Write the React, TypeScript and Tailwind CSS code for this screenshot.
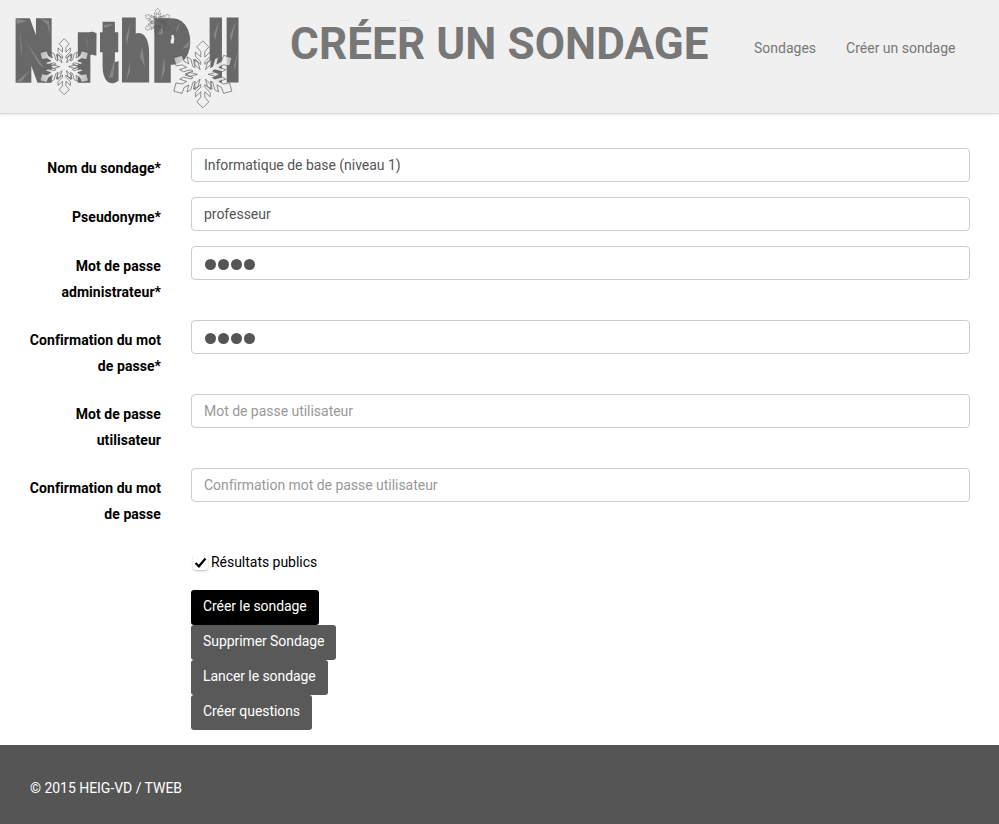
import React from "react";

const ARM: [number, number][] = [
  [-8, -14], [-24, -30], [-24, -46], [-6, -30], [-6, -38], [-22, -54], [-22, -67], [-6, -52], [-6, -68], [-18, -82],
  [0, -100],
  [18, -82], [6, -68], [6, -52], [22, -67], [22, -54], [6, -38], [6, -30], [24, -46], [24, -30],
];

function flakePoints(cx: number, cy: number, r: number) {
  const out: string[] = [];
  for (let i = 0; i < 6; i++) {
    const a = (i * Math.PI) / 3;
    for (const [x, y] of ARM) {
      const px = cx + ((x * Math.cos(a) - y * Math.sin(a)) * r) / 100;
      const py = cy + ((x * Math.sin(a) + y * Math.cos(a)) * r) / 100;
      out.push(`${px.toFixed(1)},${py.toFixed(1)}`);
    }
  }
  return out.join(" ");
}

type LetterProps = { char: string; x: number; sx: number; sy?: number };

function Letter({ char, x, sx, sy = 1 }: LetterProps) {
  return (
    <text
      transform={`translate(${x} 77) scale(${sx} ${sy})`}
      fontSize="74"
      fontWeight="900"
      strokeWidth="11.5"
      strokeLinejoin="miter"
      strokeMiterlimit="2"
    >
      {char}
    </text>
  );
}

function Logo() {
  return (
    <svg className="block h-[113px] w-[250px] font-[Roboto,sans-serif]" viewBox="0 0 250 113" role="img" aria-label="NorthPoll">
      <defs>
        <radialGradient id="ice">
          <stop offset="0" stopColor="#f0f0f0" />
          <stop offset="0.5" stopColor="#f0f0f0" stopOpacity="0.95" />
          <stop offset="1" stopColor="#f0f0f0" stopOpacity="0.65" />
        </radialGradient>
      </defs>
      <g fill="#686868" stroke="#686868">
        <Letter char="N" x={16.8} sx={0.65} />
        <Letter char="r" x={79} sx={0.53} />
        <Letter char="t" x={102.8} sx={0.52} />
        <Letter char="h" x={123.5} sx={0.58} sy={0.97} />
        <Letter char="P" x={155.5} sx={0.68} />
        <Letter char="l" x={210.5} sx={0.52} sy={0.97} />
        <Letter char="l" x={227.5} sx={0.5} sy={0.97} />
      </g>
      <path d="M171.5 35h2q1.5 3.500 0 8h-2z" fill="#f0f0f0" />
      <g fill="#888">
        <path d="M16 19l11 2-10 3zM41 19l8 2 1 14-3-11zM25 40l19 28-5-4zM16 82l13-11-7 10zM20 30l2 18-1 8z" />
        <path d="M86 36l3 15-3-11zM103 25l11-1-9 4zM109 78l6-20-2 19zM131 22l-4 23-1-8zM142 47l3 20-5-10zM126 82l4-21 0 10z" />
        <path d="M158 35l4-12 1 11zM180 23l-4 11 1-7zM190 40l-8 9 6-2zM161 81l3-25 1 14zM219 21l-4 20-1-7zM236 21l-5 21-1-7zM238 50l-3 20-1-4z" />
      </g>
      <g stroke="#555" strokeWidth="0.65" strokeLinejoin="round">
        <polygon points={flakePoints(64.2, 66.7, 28)} fill="url(#ice)" />
        <polygon points={flakePoints(202.8, 74.4, 33.5)} fill="url(#ice)" />
        <polygon points={flakePoints(157.6, 22.3, 14)} fill="none" strokeWidth="0.45" />
      </g>
    </svg>
  );
}

function Field({ label, children }: { label: string; children: React.ReactNode }) {
  return (
    <div className="mb-[15px] flex items-start">
      <label className="w-[161px] shrink-0 pl-[15px] pt-[7px] text-right font-bold leading-[26px] tracking-[0.06px]">{label}</label>
      <div className="ml-[30px] mr-[29px] flex h-[34px] flex-1 items-center rounded border border-[#ccc] bg-white px-3 tracking-[-0.03px] text-[#555]">
        {children}
      </div>
    </div>
  );
}

function Dots() {
  return (
    <span className="ml-px mt-[3px] flex gap-[2px]">
      {[0, 1, 2, 3].map((i) => (
        <span key={i} className="size-[11px] rounded-full bg-[#555]" />
      ))}
    </span>
  );
}

function Button({ children, dark = false }: { children: React.ReactNode; dark?: boolean }) {
  return (
    <button className={`h-[35px] rounded-[3px] px-3 pb-[2px] tracking-[-0.07px] text-white ${dark ? "bg-black" : "bg-[#595959]"}`}>
      {children}
    </button>
  );
}

export default function App() {
  return (
    <div className="flex h-[824px] w-[999px] flex-col overflow-hidden bg-white font-[Roboto,sans-serif] text-[14px] text-black">
      <header className="relative flex h-[114px] shrink-0 border-b border-[#dcdcdc] bg-[#f0f0f0] text-[#777] shadow-[0_1px_2px_rgba(0,0,0,0.1)]">
        <Logo />
        <span className="absolute left-[400px] top-5 h-px w-[10px] bg-[#ddd]" />
        <h1 className="ml-10 mt-[14px] w-[464px] whitespace-nowrap text-[44px] font-bold leading-[60px] tracking-[0.1px]">
          CRÉER UN SONDAGE
        </h1>
        <nav className="mt-[38px] flex gap-[30px] whitespace-nowrap leading-5">
          <a>Sondages</a>
          <a>Créer un sondage</a>
        </nav>
      </header>
      <main className="flex-1 pt-[34px]">
        <Field label="Nom du sondage*">Informatique de base (niveau 1)</Field>
        <Field label="Pseudonyme*">professeur</Field>
        <Field label="Mot de passe administrateur*"><Dots /></Field>
        <Field label="Confirmation du mot de passe*"><Dots /></Field>
        <Field label="Mot de passe utilisateur"><span className="text-[#999]">Mot de passe utilisateur</span></Field>
        <Field label="Confirmation du mot de passe"><span className="text-[#999]">Confirmation mot de passe utilisateur</span></Field>
        <div className="ml-[191px] mt-[22px] flex h-[26px] items-center">
          <span className="ml-[2px] mr-[3px] flex size-[15px] items-center justify-center rounded-[3px] bg-white shadow-[0_1px_2px_rgba(0,0,0,0.25)]">
            <svg className="size-[13px]" viewBox="0 0 13 13" fill="none" stroke="#000" strokeWidth="2.2">
              <path d="M1.5 7l3.4 3.3L11.5 2.5" />
            </svg>
          </span>
          <span className="tracking-[-0.03px]">Résultats publics</span>
        </div>
        <div className="ml-[191px] mt-[15px] flex flex-col items-start">
          <Button dark>Créer le sondage</Button>
          <Button>Supprimer Sondage</Button>
          <Button>Lancer le sondage</Button>
          <Button>Créer questions</Button>
        </div>
      </main>
      <footer className="h-[79px] shrink-0 bg-[#555] pl-[30px] pt-[30px] leading-[26px] tracking-[-0.03px] text-white">
        © 2015 HEIG-VD / TWEB
      </footer>
    </div>
  );
}
